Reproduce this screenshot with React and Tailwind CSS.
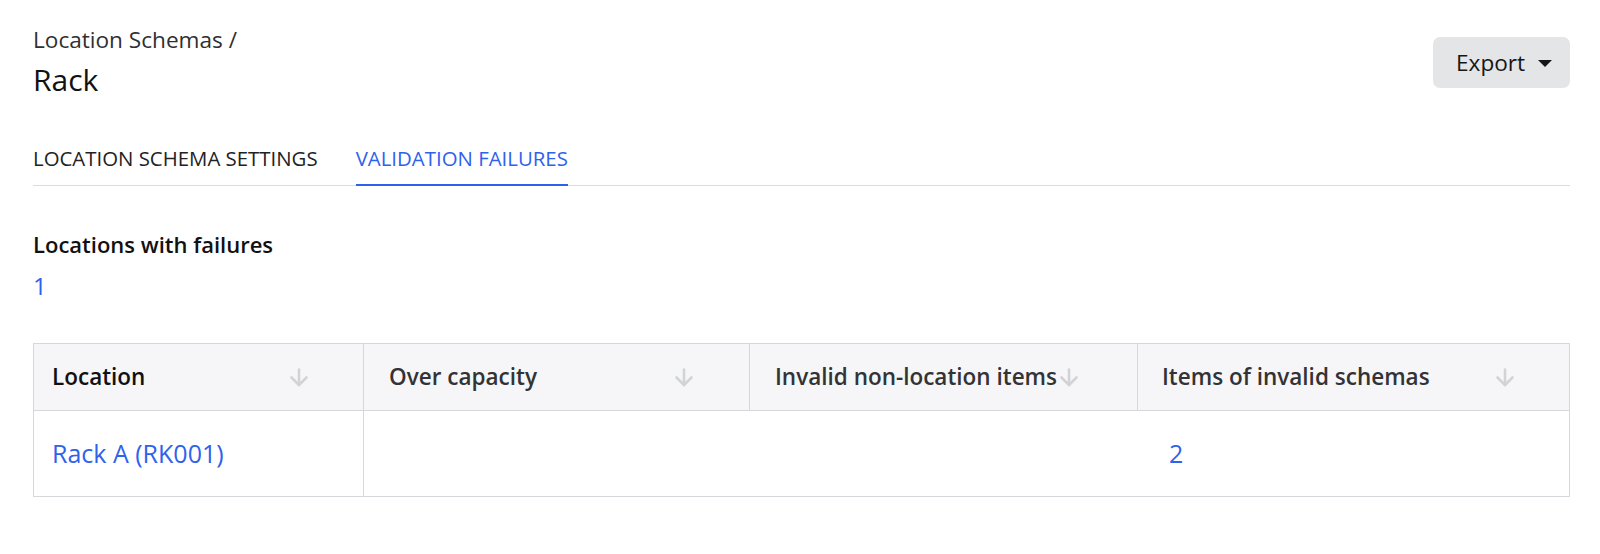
import React from "react";

function SortArrow() {
  return (
    <svg width="22" height="19" viewBox="0 0 22 19" fill="none" stroke="#d2d3d6" strokeWidth="2.6" strokeLinecap="round" strokeLinejoin="round" className="shrink-0">
      <path d="M11 1.5 L11 17" />
      <path d="M3.5 9.5 L11 17 L18.5 9.5" />
    </svg>
  );
}

export default function App() {
  return (
    <div className="w-[1600px] h-[554px] bg-white text-[#161618]" style={{ fontFamily: "'Open Sans', 'Noto Sans', sans-serif" }}>
      <div className="pl-[33px] pr-[30px] pt-[25px]">
        <div className="flex items-start justify-between">
          <div>
            <div className="text-[22.6px] leading-[30px] text-[#2f2f31]">Location Schemas /</div>
            <div className="text-[30px] leading-[36px] mt-[7px] text-[#111113]">Rack</div>
          </div>
          <button className="mt-[12px] h-[51px] w-[137px] rounded-[7px] bg-[#e4e5e7] flex items-center pl-[23px] gap-[13px] text-[22.6px] text-[#161618]">
            <span className="leading-[30px]">Export</span>
            <svg width="14" height="7" viewBox="0 0 14 7" className="mt-[1px]"><path d="M0 0 L14 0 L7 7 Z" fill="#161618" /></svg>
          </button>
        </div>

        <div className="mt-[46px] flex border-b border-[#dcdde0] text-[20.4px] leading-[28px] uppercase">
          <div className="pb-[13px] text-[#222224]">Location Schema Settings</div>
          <div className="ml-[38px] pb-[12px] text-[#2f62ec] border-b-2 border-[#2f62ec] -mb-[1px]">Validation Failures</div>
        </div>

        <div className="mt-[43px] text-[22px] font-semibold leading-[30px] text-[#111113]">Locations with failures</div>
        <div className="mt-[12px] text-[24px] leading-[30px] text-[#2f62ec]">1</div>

        <div className="mt-[42px] border border-[#d6d7da]">
          <div className="flex h-[67px] bg-[#f6f6f8] border-b border-[#d6d7da] text-[22.5px] font-semibold">
            <div className="w-[330px] shrink-0 flex items-center justify-between pl-[18px] pr-[53px] border-r border-[#d6d7da] text-[#111113]">
              <span>Location</span>
              <SortArrow />
            </div>
            <div className="w-[386px] shrink-0 flex items-center justify-between pl-[25px] pr-[54px] border-r border-[#d6d7da] text-[#333335]">
              <span>Over capacity</span>
              <SortArrow />
            </div>
            <div className="w-[388px] shrink-0 flex items-center gap-[1px] pl-[25px] border-r border-[#d6d7da] text-[#333335] whitespace-nowrap">
              <span>Invalid non-location items</span>
              <SortArrow />
            </div>
            <div className="flex-1 flex items-center justify-between pl-[24px] pr-[53px] text-[#333335]">
              <span>Items of invalid schemas</span>
              <SortArrow />
            </div>
          </div>
          <div className="flex h-[85px] text-[25px] text-[#2f62ec]">
            <div className="w-[330px] shrink-0 flex items-center pl-[18px] border-r border-[#d6d7da]">Rack A (RK001)</div>
            <div className="w-[774px] shrink-0"></div>
            <div className="flex-1 flex items-center pl-[31px]">2</div>
          </div>
        </div>
      </div>
    </div>
  );
}
